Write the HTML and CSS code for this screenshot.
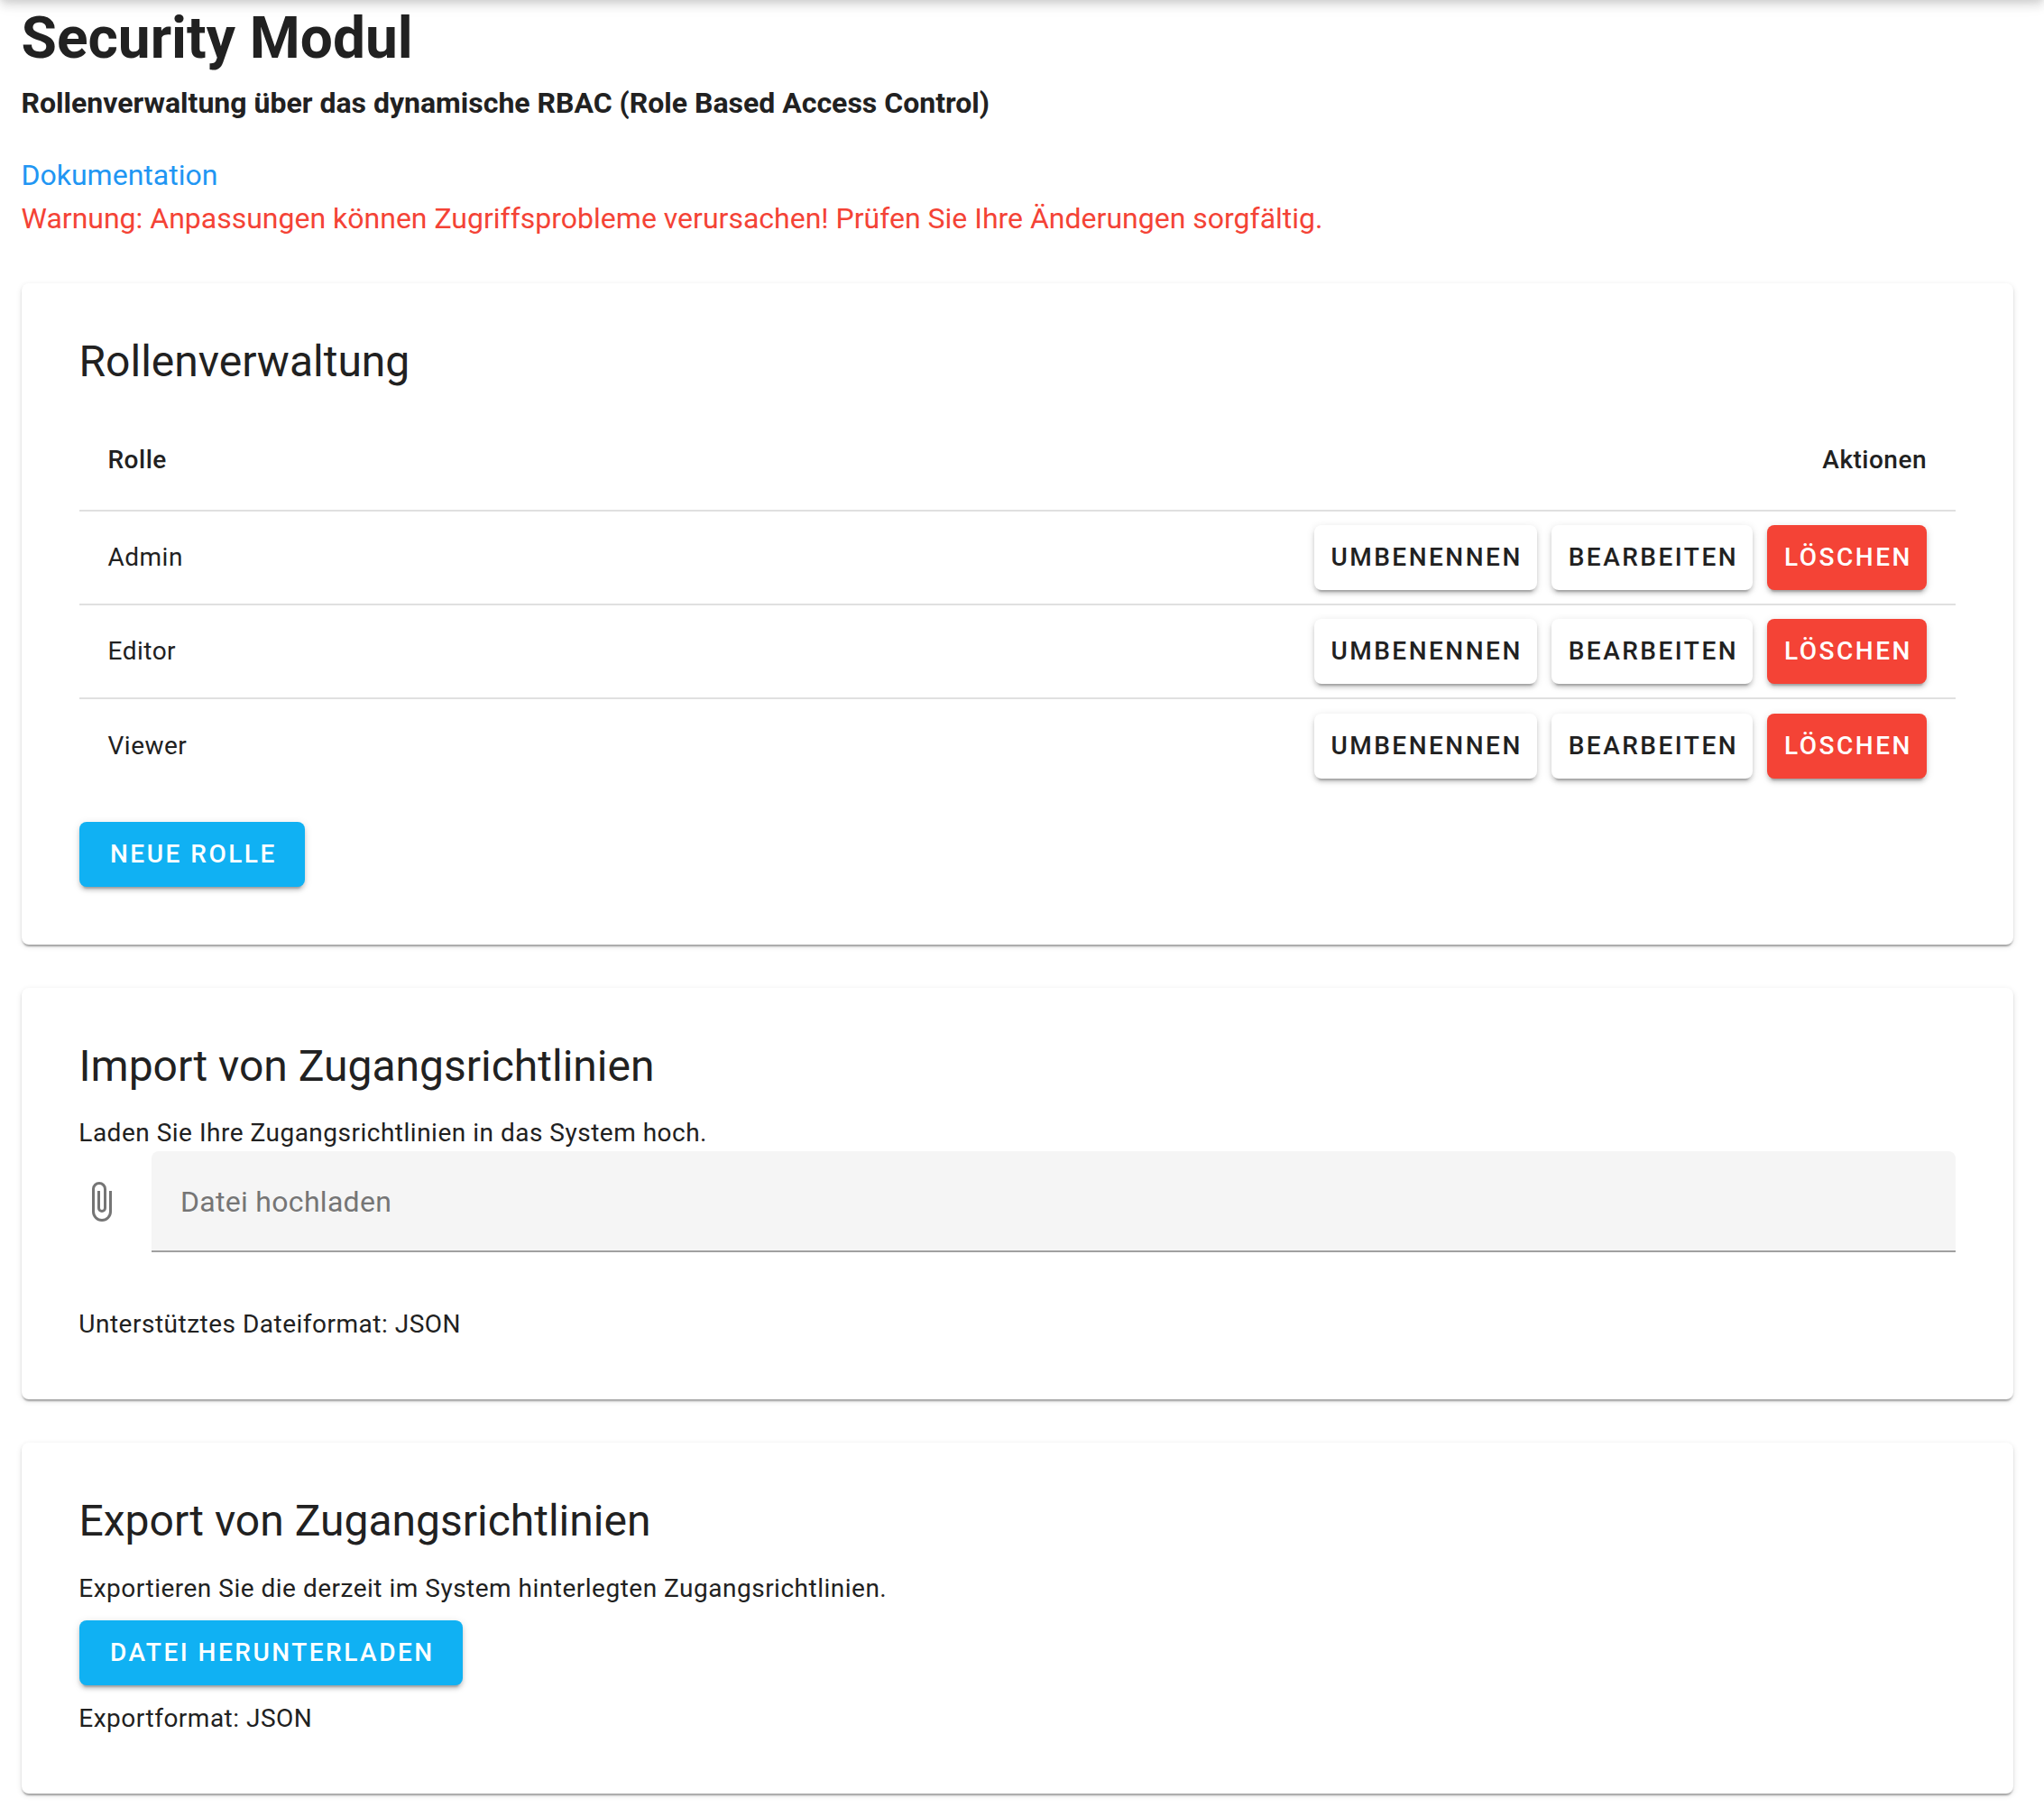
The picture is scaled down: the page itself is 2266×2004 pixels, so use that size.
FILE: index.html
```html
<!DOCTYPE html>
<html lang="de">
<head>
<meta charset="utf-8">
<title>Security Modul</title>
<link rel="stylesheet" href="styles.css">
</head>
<body>
<div class="app-bar"></div>
<main class="page">
  <header class="intro">
    <h1 class="page-title">Security Modul</h1>
    <p class="subtitle">Rollenverwaltung über das dynamische RBAC (Role Based Access Control)</p>
    <p class="line"><a class="doc-link" href="#">Dokumentation</a></p>
    <p class="line warning">Warnung: Anpassungen können Zugriffsprobleme verursachen! Prüfen Sie Ihre Änderungen sorgfältig.</p>
  </header>

  <section class="card card-roles">
    <h2 class="card-title">Rollenverwaltung</h2>
    <div class="roles">
      <div class="row row-head"><span>Rolle</span><span>Aktionen</span></div>
      <div class="row"><span>Admin</span><div class="actions"><button class="btn btn-small">Umbenennen</button><button class="btn btn-small">Bearbeiten</button><button class="btn btn-small btn-error">Löschen</button></div></div>
      <div class="row"><span>Editor</span><div class="actions"><button class="btn btn-small">Umbenennen</button><button class="btn btn-small">Bearbeiten</button><button class="btn btn-small btn-error">Löschen</button></div></div>
      <div class="row"><span>Viewer</span><div class="actions"><button class="btn btn-small">Umbenennen</button><button class="btn btn-small">Bearbeiten</button><button class="btn btn-small btn-error">Löschen</button></div></div>
    </div>
    <button class="btn btn-primary">Neue Rolle</button>
  </section>

  <section class="card card-import">
    <h2 class="card-title">Import von Zugangsrichtlinien</h2>
    <p class="text">Laden Sie Ihre Zugangsrichtlinien in das System hoch.</p>
    <div class="file-input">
      <svg class="clip" viewBox="0 0 24 24"><path d="M16.5,6V17.5A4,4 0 0,1 12.5,21.5A4,4 0 0,1 8.5,17.5V5A2.5,2.5 0 0,1 11,2.5A2.5,2.5 0 0,1 13.5,5V15.5A1,1 0 0,1 12.5,16.5A1,1 0 0,1 11.5,15.5V6H10V15.5A2.5,2.5 0 0,0 12.5,18A2.5,2.5 0 0,0 15,15.5V5A4,4 0 0,0 11,1A4,4 0 0,0 7,5V17.5A5.5,5.5 0 0,0 12.5,23A5.5,5.5 0 0,0 18,17.5V6H16.5Z"/></svg>
      <div class="field">Datei hochladen</div>
    </div>
    <p class="text">Unterstütztes Dateiformat: JSON</p>
  </section>

  <section class="card card-export">
    <h2 class="card-title">Export von Zugangsrichtlinien</h2>
    <p class="text">Exportieren Sie die derzeit im System hinterlegten Zugangsrichtlinien.</p>
    <button class="btn btn-primary">Datei herunterladen</button>
    <p class="text">Exportformat: JSON</p>
  </section>
</main>
</body>
</html>
```
FILE: styles.css
```css
* { box-sizing: border-box; }

body {
  margin: 0;
  background: #fff;
  color: #212121;
  font-family: Roboto, sans-serif;
  font-size: 32px;
  line-height: 48px;
}

h1, h2, p { margin: 0; }

/* Bar above the visible area, only its shadow reaches the page */
.app-bar {
  position: fixed;
  top: -113px;
  left: 0;
  right: 0;
  height: 112px;
  box-shadow: 0 4px 8px -2px rgba(0,0,0,.08), 0 8px 10px 0 rgba(0,0,0,.09), 0 2px 20px 0 rgba(0,0,0,.09);
}

.page {
  display: flex;
  flex-direction: column;
  gap: 48px;
  min-height: 100vh;
  padding: 5px 34px 0 24px;
}

.intro { height: 261px; margin-left: -0.5px; }

.page-title {
  font-size: 64px;
  font-weight: 700;
  line-height: 75px;
}

.subtitle {
  font-weight: 700;
  line-height: 48px;
  margin: 10px 0 32px;
}

.doc-link { color: #2196f3; text-decoration: none; }
.warning { color: #f44336; }

.card {
  display: flex;
  flex-direction: column;
  align-items: flex-start;
  padding: 64px;
  border-radius: 8px;
  background: #fff;
  box-shadow: 0 4px 2px -2px rgba(0,0,0,.2), 0 2px 2px 0 rgba(0,0,0,.14), 0 2px 6px 0 rgba(0,0,0,.12);
}

.card-roles { height: 733px; }
.card-import { height: 456px; }
.card-export { height: 389px; }

.card-title {
  margin-left: -0.5px;
  font-size: 48px;
  font-weight: 400;
  line-height: 46px;
}

.roles { width: 100%; margin: 47px 0 33px; }

.row {
  display: flex;
  align-items: center;
  justify-content: space-between;
  height: 104px;
  padding: 0 32px 0 31.5px;
  border-bottom: 2px solid #e0e0e0;
  font-size: 28px;
  letter-spacing: .5px;
}
.row:last-child { height: 103px; padding-top: 1px; border-bottom: 0; }
.row-head { height: 96px; padding-bottom: 16px; font-weight: 500; }

.actions { display: flex; gap: 16px; }

.btn {
  flex-shrink: 0;
  height: 72px;
  padding: 0 31.5px 0 34px;
  border: 0;
  border-radius: 8px;
  background: #fff;
  color: #212121;
  font: 500 28px/40px Roboto, sans-serif;
  letter-spacing: 2.5px;
  text-transform: uppercase;
  white-space: nowrap;
  box-shadow: 0 6px 2px -4px rgba(0,0,0,.2), 0 4px 4px 0 rgba(0,0,0,.14), 0 2px 10px 0 rgba(0,0,0,.12);
}
.btn-small { padding: 0 16.2px 0 18.7px; }
.btn-error { background: #f44336; color: #fff; }
.btn-primary { background: #10b1f3; color: #fff; }

.text {
  margin-left: -0.7px;
  font-size: 28px;
  line-height: 40px;
  letter-spacing: .5px;
}
.card-import .card-title { margin-bottom: 31px; }
.card-export .card-title { margin-bottom: 32px; }

.file-input {
  display: flex;
  align-items: center;
  gap: 32px;
  width: 100%;
  height: 112px;
  margin: 0 0 60px;
}
.clip { width: 48px; height: 48px; fill: #757575; }
.field {
  flex: 1;
  height: 112px;
  padding: 32px;
  border-bottom: 2px solid #a0a0a0;
  border-radius: 8px 8px 0 0;
  background: #f5f5f5;
  color: #757575;
  letter-spacing: .3px;
}
.card-export .btn { margin: 15px 0 17px; }
```
